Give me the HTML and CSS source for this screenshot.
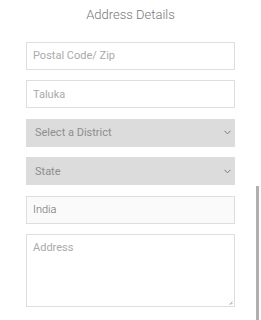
FILE: index.html
```html
<!DOCTYPE html>
<html>
<head>
<meta charset="utf-8">
<link rel="stylesheet" href="styles.css">
</head>
<body>
<div class="page">
  <h2 class="title">Address Details</h2>
  <form class="form">
    <input class="field" type="text" placeholder="Postal Code/ Zip">
    <input class="field" type="text" placeholder="Taluka">
    <div class="select">
      <span>Select a District</span>
      <svg class="chev" width="7" height="5" viewBox="0 0 7 5"><path d="M0.5 0.8 L3.5 3.8 L6.5 0.8" fill="none" stroke="#777" stroke-width="1"/></svg>
    </div>
    <div class="select">
      <span>State</span>
      <svg class="chev" width="7" height="5" viewBox="0 0 7 5"><path d="M0.5 0.8 L3.5 3.8 L6.5 0.8" fill="none" stroke="#777" stroke-width="1"/></svg>
    </div>
    <input class="field filled" type="text" value="India">
    <div class="area-wrap">
      <textarea class="field area" placeholder="Address"></textarea>
      <svg class="grip" width="4" height="4" viewBox="0 0 4 4"><path d="M3.5 0.5 L0.5 3.5 M3.5 2 L2 3.5" stroke="#999" stroke-width="0.8"/></svg>
    </div>
  </form>
</div>
<div class="scrollbar"></div>
</body>
</html>
```

FILE: styles.css
```css
html, body {
  margin: 0;
  padding: 0;
  background: #fff;
  overflow: hidden;
}
body {
  width: 261px;
  height: 320px;
  font-family: Roboto, "Liberation Sans", sans-serif;
}
.page {
  padding: 0 26px 0 26px;
}
.title {
  margin: 0;
  padding-top: 6px;
  height: 41.5px;
  box-sizing: border-box;
  text-align: center;
  font-weight: 300;
  font-size: 13px;
  line-height: 18px;
  color: #777;
}
.form {
  display: flex;
  flex-direction: column;
  gap: 10.5px;
}
.field {
  box-sizing: border-box;
  display: block;
  width: 209px;
  height: 28px;
  margin: 0;
  border: 1px solid #dedede;
  border-radius: 0;
  background: #fff;
  padding: 0 6px;
  font-family: Roboto, "Liberation Sans", sans-serif;
  font-weight: 400;
  font-size: 11px;
  color: #888;
  outline: none;
}
.field::placeholder {
  color: #aaa;
}
.filled {
  background: #fafafa;
  font-weight: 300;
  color: #6a6a6a;
}
.select {
  box-sizing: border-box;
  width: 209px;
  height: 28px;
  background: #dcdcdc;
  display: flex;
  align-items: center;
  justify-content: space-between;
  padding: 0 4px 0 9px;
  font-size: 11px;
  font-weight: 400;
  color: #8e8e8e;
}
.chev {
  display: block;
}
.area-wrap {
  position: relative;
  width: 209px;
  height: 73px;
}
.area {
  height: 73px;
  padding: 6px 6px;
  resize: none;
}
.grip {
  position: absolute;
  right: 2px;
  bottom: 2px;
}
.scrollbar {
  position: absolute;
  left: 256px;
  top: 186px;
  width: 3px;
  height: 134px;
  background: #b0b0b0;
}
```
